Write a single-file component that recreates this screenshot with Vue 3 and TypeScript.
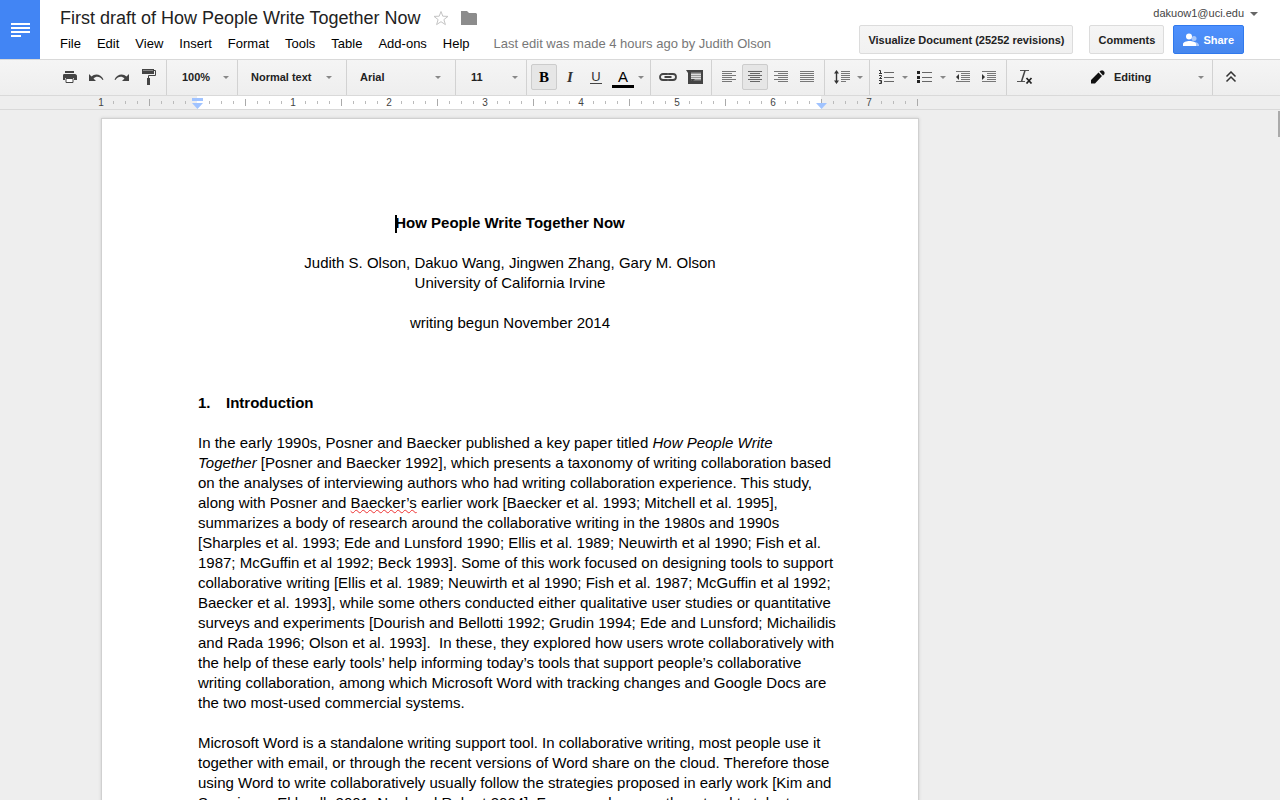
<script setup lang="ts">
import { ref } from 'vue'

const menus: string[] = ['File', 'Edit', 'View', 'Insert', 'Format', 'Tools', 'Table', 'Add-ons', 'Help']

interface Tick { label: string; major: boolean }
const ticks: Tick[] = Array.from({ length: 69 }, (_, i) => {
  const inch = i / 8 - 1
  const whole = i % 8 === 0
  return {
    label: whole && inch !== 0 ? String(Math.abs(inch)) : '',
    major: i % 8 === 4,
  }
})

const zoom = ref('100%')
const styleName = ref('Normal text')
const font = ref('Arial')
const size = ref('11')
const mode = ref('Editing')
</script>

<template>
  <div class="app">
    <header class="header">
      <a class="logo" href="#" aria-label="Docs home">
        <svg width="20" height="16" viewBox="0 0 20 16"><path d="M1 1h19v2H1zM1 5h19v2H1zM1 9h19v2H1zM1 13h10v2H1z" fill="#fff" /></svg>
      </a>
      <div class="titles">
        <div class="title-row">
          <h1>First draft of How People Write Together Now</h1>
          <button class="plain star" aria-label="Star">
            <svg width="16" height="16" viewBox="0 0 16 16"><path d="M8 1.500l1.800 4.700 5.200.2-4.100 3.200 1.500 5L8 11.700l-4.400 2.900 1.500-5L1 6.400l5.200-.2z" fill="none" stroke="#c4c4c4" /></svg>
          </button>
          <button class="plain folder" aria-label="Move to folder">
            <svg width="16" height="14" viewBox="0 0 16 14"><path d="M0 0h6l2 2h7l1 1v11H0z" fill="#8c8c8c" /></svg>
          </button>
        </div>
        <nav class="menu-row">
          <button v-for="m in menus" :key="m" class="plain menu">{{ m }}</button>
          <a class="last-edit" href="#">Last edit was made 4 hours ago by Judith Olson</a>
        </nav>
      </div>
      <div class="account">
        <button class="plain email">
          dakuow1@uci.edu
          <svg width="8" height="4" viewBox="0 0 8 4"><path d="M0 0h8L4 4z" fill="#666" /></svg>
        </button>
        <div class="actions">
          <button class="action visualize">Visualize Document (25252 revisions)</button>
          <button class="action comments">Comments</button>
          <button class="action share">
            <svg width="16" height="14" viewBox="0 0 16 14"><g fill="#a6c6fb"><circle cx="11" cy="5.500" r="2.500" /><path d="M11 9c3 0 5 1.500 5 3v1h-5z" /></g><g fill="#fff"><circle cx="6" cy="3.500" r="3" /><path d="M0 13v-2c0-2 3.500-3 6.500-3s6.500 1 6.500 3v2z" /></g></svg>
            Share
          </button>
        </div>
      </div>
    </header>

    <div class="toolbar" role="toolbar" aria-label="Formatting">
      <div class="group main">
        <button class="tool" aria-label="Print">
          <svg width="16" height="14" viewBox="0 0 16 14"><path d="M3 1h9v2H3zM2 4h11c1 0 2 1 2 2v4h-3V8H3v2H1V6c0-1 0-2 1-2z" fill="#444" /><path d="M4 8.500h7v4H4z" fill="#fff" stroke="#444" /></svg>
        </button>
        <button class="tool" aria-label="Undo">
          <svg width="16" height="12" viewBox="0 0 16 12"><path d="M1 3v7h7L5.500 7.500C8 5 12 5 14.500 9l1-.5C13 3 7 2 3.500 5.500z" fill="#444" /></svg>
        </button>
        <button class="tool" aria-label="Redo">
          <svg width="16" height="12" viewBox="0 0 16 12"><path d="M15 3v7H8l2.500-2.500C8 5 4 5 1.500 9l-1-.5C3 3 9 2 12.500 5.500z" fill="#444" /></svg>
        </button>
        <button class="tool" aria-label="Paint format">
          <svg width="16" height="16" viewBox="0 0 16 16"><path d="M2 0h12v5H2zM7 9h3v7H7z" fill="#444" /><path d="M14 1.500h1.500v5h-7V10" fill="none" stroke="#444" /><path d="M3 1.500h10" stroke="#888" /></svg>
        </button>
      </div>
      <label class="group pick zoom">
        <select v-model="zoom" aria-label="Zoom"><option>100%</option></select><i class="arrow" />
      </label>
      <label class="group pick style">
        <select v-model="styleName" aria-label="Styles"><option>Normal text</option></select><i class="arrow" />
      </label>
      <label class="group pick font">
        <select v-model="font" aria-label="Font"><option>Arial</option></select><i class="arrow" />
      </label>
      <label class="group pick size">
        <select v-model="size" aria-label="Font size"><option>11</option></select><i class="arrow" />
      </label>
      <div class="group text">
        <button class="tool on serif" aria-label="Bold"><b>B</b></button>
        <button class="tool serif" aria-label="Italic"><em>I</em></button>
        <button class="tool under" aria-label="Underline"><span>U</span></button>
        <button class="tool colour" aria-label="Text color"><span>A</span><i class="arrow" /></button>
      </div>
      <div class="group link">
        <button class="tool" aria-label="Insert link">
          <svg width="18" height="8" viewBox="0 0 18 8"><path d="M8 2V1H4a3 3 0 0 0 0 6h4V6M10 2V1h4a3 3 0 0 1 0 6h-4V6M5.500 4h7" fill="none" stroke="#444" stroke-width="1.800" /></svg>
        </button>
        <button class="tool" aria-label="Insert comment">
          <svg width="17" height="14" viewBox="0 0 17 14"><path d="M0 0h17v14H2V3z" fill="#444" /><path d="M5 2.500h10v8H5z" fill="#999" /><path d="M5 4.500h10M5 6.500h10M5 8.500h10" stroke="#ddd" /><path d="M5 9h4l-3 3z" fill="#444" /></svg>
        </button>
      </div>
      <div class="group align">
        <button class="tool" aria-label="Left align">
          <svg width="14" height="12" viewBox="0 0 14 12"><path d="M0 .5h14M0 2.500h10M0 4.500h14M0 6.500h10M0 8.500h14M0 10.500h10" stroke="#777" /></svg>
        </button>
        <button class="tool on" aria-label="Center align">
          <svg width="14" height="12" viewBox="0 0 14 12"><path d="M0 .5h14M2 2.500h10M0 4.500h14M2 6.500h10M0 8.500h14M2 10.500h10" stroke="#666" /></svg>
        </button>
        <button class="tool" aria-label="Right align">
          <svg width="14" height="12" viewBox="0 0 14 12"><path d="M0 .5h14M4 2.500h10M0 4.500h14M4 6.500h10M0 8.500h14M4 10.500h10" stroke="#777" /></svg>
        </button>
        <button class="tool" aria-label="Justify">
          <svg width="14" height="12" viewBox="0 0 14 12"><path d="M0 .5h14M0 2.500h14M0 4.500h14M0 6.500h14M0 8.500h14M0 10.500h14" stroke="#777" /></svg>
        </button>
      </div>
      <div class="group spacing">
        <button class="tool wide" aria-label="Line spacing">
          <svg width="17" height="14" viewBox="0 0 17 14"><path d="M7 1.500h9M7 3.500h9M7 5.500h9M7 7.500h9M7 9.500h9M7 11.500h5" stroke="#777" /><path d="M2.500 2v10" stroke="#333" stroke-width="1.400" /><path d="M0 3.500L2.500 0 5 3.500zM0 10.500L2.500 14 5 10.500z" fill="#333" /></svg>
          <i class="arrow" />
        </button>
      </div>
      <div class="group lists">
        <button class="tool wide" aria-label="Numbered list">
          <svg width="16" height="14" viewBox="0 0 16 14"><path d="M6 2.500h10M6 7.500h10M6 11.500h10" stroke="#666" /><path d="M1 .5h1.500v3M1 3.500h3M1 5.500h2.500v1L1.500 8.500H4M1 10.500h2.500v1.500H2m1.500 0v1.500H1" fill="none" stroke="#333" /></svg>
          <i class="arrow" />
        </button>
        <button class="tool wide" aria-label="Bulleted list">
          <svg width="16" height="14" viewBox="0 0 16 14"><path d="M6 2.500h10M6 7.500h10M6 11.500h10" stroke="#666" /><path d="M1 1h3v3H1zM1 6h3v3H1zM1 10h3v3H1z" fill="#222" /></svg>
          <i class="arrow" />
        </button>
        <button class="tool" aria-label="Decrease indent">
          <svg width="14" height="12" viewBox="0 0 14 12"><path d="M0 .5h14M5 2.500h9M5 4.500h9M5 6.500h9M5 8.500h9M0 10.500h14" stroke="#777" /><path d="M3 3v6L0 6z" fill="#333" /></svg>
        </button>
        <button class="tool" aria-label="Increase indent">
          <svg width="14" height="12" viewBox="0 0 14 12"><path d="M0 .5h14M5 2.500h9M5 4.500h9M5 6.500h9M5 8.500h9M0 10.500h14" stroke="#777" /><path d="M0 3v6l3-3z" fill="#333" /></svg>
        </button>
      </div>
      <div class="group clear">
        <button class="tool" aria-label="Clear formatting">
          <svg width="16" height="14" viewBox="0 0 16 14"><path d="M3 .5h9M0 11.500h8" stroke="#555" /><path d="M8 .5l-3.500 11" stroke="#444" stroke-width="1.500" /><path d="M9.500 8l5 5.500M14.500 8l-5 5.500" stroke="#222" stroke-width="1.700" /></svg>
        </button>
      </div>
      <label class="group pick mode">
        <svg width="14" height="14" viewBox="0 0 14 14"><path d="M0 13.500V10L7.500 2.500l3.500 3.500L4 13.500zM8.500 1.500L10 .5h2L13.500 2v2L12 5.500z" fill="#111" /></svg>
        <select v-model="mode" aria-label="Mode"><option>Editing</option></select><i class="arrow" />
      </label>
      <div class="group collapse">
        <button class="tool" aria-label="Hide the menus">
          <svg width="12" height="12" viewBox="0 0 12 12"><path d="M1.500 5.500L6 1l4.500 4.500M1.500 10.500L6 6l4.500 4.500" fill="none" stroke="#333" stroke-width="1.500" /></svg>
        </button>
      </div>
    </div>

    <div class="ruler">
      <span v-for="(t, i) in ticks" :key="i" class="tick" :class="{ major: t.major }">
        <template v-if="t.label">{{ t.label }}</template>
        <svg v-else-if="i === 8" class="marker" width="12" height="13" viewBox="0 0 12 13"><path d="M1 2h11v3H1zM1 7h11L6.500 13z" fill="#a0c3ff" /></svg>
        <i v-else />
        <svg v-if="i === 60" class="marker end" width="12" height="6" viewBox="0 0 12 6"><path d="M0 0h11L5.500 6z" fill="#a0c3ff" /></svg>
      </span>
    </div>

    <main class="canvas">
      <article class="page">
        <h2 class="center"><span class="caret" />How People Write Together Now</h2>
        <p class="center">
          Judith S. Olson, Dakuo Wang, Jingwen Zhang, Gary M. Olson<br>
          University of California Irvine
        </p>
        <p class="center">writing begun November 2014</p>
        <h3><span class="num">1.</span>Introduction</h3>
        <p>
          In the early 1990s, Posner and Baecker published a key paper titled <em>How People Write<br>
          Together</em> [Posner and Baecker 1992], which presents a taxonomy of writing collaboration based<br>
          on the analyses of interviewing authors who had writing collaboration experience. This study,<br>
          along with Posner and <span class="misspelt">Baecker’s</span> earlier work [Baecker et al. 1993; Mitchell et al. 1995],<br>
          summarizes a body of research around the collaborative writing in the 1980s and 1990s<br>
          [Sharples et al. 1993; Ede and Lunsford 1990; Ellis et al. 1989; Neuwirth et al 1990; Fish et al.<br>
          1987; McGuffin et al 1992; Beck 1993]. Some of this work focused on designing tools to support<br>
          collaborative writing [Ellis et al. 1989; Neuwirth et al 1990; Fish et al. 1987; McGuffin et al 1992;<br>
          Baecker et al. 1993], while some others conducted either qualitative user studies or quantitative<br>
          surveys and experiments [Dourish and Bellotti 1992; Grudin 1994; Ede and Lunsford; Michailidis<br>
          and Rada 1996; Olson et al. 1993].&nbsp; In these, they explored how users wrote collaboratively with<br>
          the help of these early tools’ help informing today’s tools that support people’s collaborative<br>
          writing collaboration, among which Microsoft Word with tracking changes and Google Docs are<br>
          the two most-used commercial systems.
        </p>
        <p>
          Microsoft Word is a standalone writing support tool. In collaborative writing, most people use it<br>
          together with email, or through the recent versions of Word share on the cloud. Therefore those<br>
          using Word to write collaboratively usually follow the strategies proposed in early work [Kim and<br>
          Severinson Eklundh 2001; Noel and Robert 2004]. For example, co-authors tend to take turns
        </p>
      </article>
      <div class="scroll-thumb" />
    </main>
  </div>
</template>

<style>
body { margin: 0; background: #eee; overflow: hidden; }
</style>

<style scoped>
* { box-sizing: border-box; }
.app {
  height: 100vh;
  display: flex;
  flex-direction: column;
  font-family: "Liberation Sans", Arial, sans-serif;
  font-size: 13px;
  color: #000;
  background: #eee;
}
button, select { font: inherit; color: inherit; margin: 0; padding: 0; border: 0; background: none; }
svg { display: block; flex: none; }

.header { display: flex; height: 59px; flex: none; background: #fff; }
.logo { width: 40px; background: #4285f4; display: flex; align-items: center; justify-content: center; }
.titles { flex: 1; padding: 6px 0 0 20px; white-space: nowrap; }
.title-row { display: flex; align-items: center; height: 24px; }
h1 { margin: 0; font-size: 18px; font-weight: normal; color: #222; }
.star { margin-left: 13px; }
.folder { margin-left: 12px; }
.menu-row { display: flex; align-items: center; height: 26px; gap: 16px; }
.last-edit { color: #777; text-decoration: none; margin-left: 8px; }
.account { display: flex; flex-direction: column; align-items: flex-end; padding: 6px 22px 0 0; }
.email { display: flex; align-items: center; gap: 6px; font-size: 11px; line-height: 15px; color: #444; }
.actions { display: flex; margin: 4px 14px 0 0; gap: 16px; }
.action {
  height: 29px;
  padding: 0 8px;
  border: 1px solid #dcdcdc;
  border-radius: 2px;
  background: linear-gradient(#f5f5f5, #f1f1f1);
  font-size: 11px;
  font-weight: bold;
  color: #222;
  white-space: nowrap;
}
.comments { min-width: 75px; }
.share {
  display: flex;
  align-items: center;
  gap: 4px;
  margin-left: -7px;
  padding: 0 9px;
  color: #fff;
  border-color: #3079ed;
  background: linear-gradient(#4d90fe, #4787ed);
}

.toolbar {
  display: flex;
  flex: none;
  height: 37px;
  border-top: 1px solid #d9d9d9;
  border-bottom: 1px solid #d9d9d9;
  background: linear-gradient(#f5f5f5, #eee);
}
.group { display: flex; align-items: center; flex: none; padding-bottom: 1px; border-right: 1px solid #d2d2d2; }
.tool { display: flex; align-items: center; justify-content: center; width: 26px; height: 26px; flex: none; }
.tool.on { border: 1px solid #ccc; border-radius: 2px; background: #e6e6e6; }
.arrow { border: 3px solid transparent; border-top-color: #888; border-bottom: 0; width: 0; height: 0; flex: none; }
.main { width: 167px; padding-left: 57px; }
.pick { font-size: 11px; font-weight: bold; color: #222; padding: 0 8px 1px 13px; }
.pick select { appearance: none; flex: 1; min-width: 0; }
.zoom { width: 71px; padding-left: 15px; }
.style { width: 109px; padding-right: 14px; }
.font { width: 109px; padding-right: 14px; }
.size { width: 71px; padding-left: 15px; }
.text { width: 124px; padding-left: 4px; }
.serif { font: 15px "Liberation Serif", serif; color: #333; }
.serif b { font-weight: 900; color: #000; }
.serif em { font-weight: bold; }
.under { color: #333; }
.under span { border-bottom: 1px solid #444; line-height: 12px; padding: 0 1px; }
.colour { width: 38px; gap: 4px; }
.colour span { width: 22px; font-size: 15px; line-height: 16px; border-bottom: 3px solid #000; margin-top: 2px; }
.link { width: 61px; padding-left: 4px; }
.align { width: 113px; padding-left: 4px; }
.spacing { width: 45px; padding-left: 4px; }
.wide { width: 38px; gap: 6px; }
.lists { width: 137px; padding-left: 4px; }
.lists .wide { gap: 8px; }
.clear { flex: 1; border-right: 0; padding-left: 5px; }
.mode { width: 135px; gap: 9px; }
.collapse { width: 67px; padding-left: 5px; border-right: 0; }

.ruler {
  display: flex;
  flex: none;
  height: 14px;
  padding-left: 95px;
  border-bottom: 1px solid #d9d9d9;
  background: linear-gradient(#fff, #fff) 197px 0 / 624px 13px no-repeat #eee;
  overflow: hidden;
}
.tick {
  position: relative;
  display: flex;
  align-items: center;
  justify-content: center;
  width: 12px;
  flex: none;
  font-size: 10px;
  color: #444;
}
.tick i { width: 1px; height: 3px; background: #bbb; }
.tick.major i { height: 7px; background: #aaa; }
.marker.end { position: absolute; left: 1px; bottom: 0; }

.canvas { flex: 1; min-height: 0; display: flex; justify-content: space-between; align-items: flex-start; padding: 9px 0 0 102px; overflow: hidden; }
.page {
  width: 816px;
  min-height: 1056px;
  padding: 94px 96px;
  background: #fff;
  box-shadow: 0 0 0 1px #d0d0d0, 0 0 3px 1px #ccc;
  font-size: 15px;
  line-height: 20px;
  white-space: nowrap;
}
.page p, .page h2, .page h3 { margin: 0 0 20px; font-size: inherit; }
.page h3 { margin-top: 60px; }
.num { display: inline-block; width: 28px; }
.center { text-align: center; }
.caret { display: inline-block; width: 2px; height: 18px; margin-right: -2px; vertical-align: middle; background: #000; }
.misspelt { text-decoration: underline wavy #e33 1px; }
.scroll-thumb { width: 2px; height: 26px; background: #aaa; margin-top: -8px; }
</style>
